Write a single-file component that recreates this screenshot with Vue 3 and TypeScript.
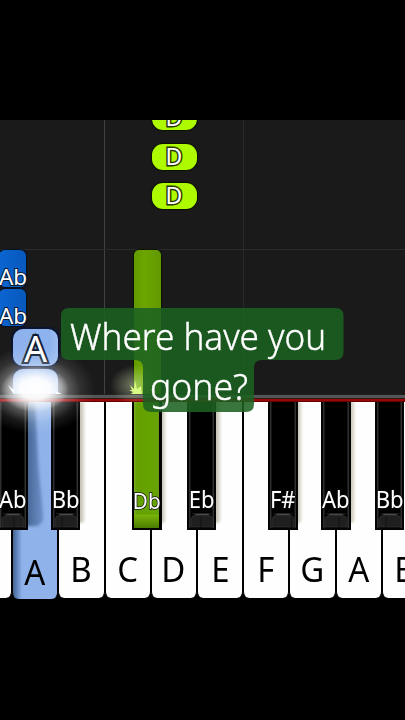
<script setup lang="ts">
interface Note { label: string; x: number; y: number; w: number; h: number; kind: string }
interface BlackKey { label: string; x: number; active?: boolean; shade?: boolean; split: number }

const notes: Note[] = [
  { label: 'D', x: 151.5, y: -16, w: 45, h: 26, kind: 'lime' },
  { label: 'D', x: 151.5, y: 23.5, w: 45, h: 26, kind: 'lime' },
  { label: 'D', x: 151.5, y: 62.5, w: 45, h: 26, kind: 'lime' },
  { label: 'Ab', x: -1, y: 130, w: 27, h: 37, kind: 'blue' },
  { label: 'Ab', x: -1, y: 169, w: 27, h: 37, kind: 'blue' },
  { label: 'A', x: 13, y: 209, w: 45, h: 37, kind: 'sky' },
  { label: '', x: 13, y: 249, w: 45, h: 37, kind: 'sky' },
  { label: '', x: 134, y: 130, w: 27, h: 160, kind: 'green' },
]

const whiteKeys: string[] = ['', 'A', 'B', 'C', 'D', 'E', 'F', 'G', 'A', 'B']

const blackKeys: BlackKey[] = [
  { label: 'Ab', x: -2, split: 13 },
  { label: 'Bb', x: 50.5, shade: true, split: 8 },
  { label: 'Db', x: 132, active: true, shade: true, split: 19 },
  { label: 'Eb', x: 186.5, shade: true, split: 11 },
  { label: 'F#', x: 268, shade: true, split: 21 },
  { label: 'Ab', x: 321, shade: true, split: 15 },
  { label: 'Bb', x: 374.5, split: 8 },
]
</script>

<template>
  <main class="screen">
    <section class="roll">
      <i class="vline first"></i>
      <i class="vline second"></i>
      <i class="hline"></i>
      <div
        v-for="(n, i) in notes"
        :key="i"
        class="note"
        :class="n.kind"
        :style="{ left: n.x + 'px', top: n.y + 'px', width: n.w + 'px', height: n.h + 'px' }"
      ><span>{{ n.label }}</span></div>
    </section>
    <div class="rail"></div>
    <section class="keyboard">
      <div class="whites">
        <div v-for="(k, i) in whiteKeys" :key="i" class="white" :class="{ pressed: i === 1 }">
          <i v-if="i === 1" class="cast"></i>
          <span>{{ k }}</span>
        </div>
      </div>
      <div
        v-for="(b, i) in blackKeys"
        :key="i"
        class="black"
        :class="{ active: b.active, shade: b.shade }"
        :style="{ left: b.x + 'px' }"
      >
        <div class="body"></div>
        <svg v-if="!b.active" class="lip" viewBox="0 0 24 16">
          <path d="M4 1.500H20L18 3H6Z" fill="#484848" />
          <path d="M1 15V7Q2 3.500 5 3.500H19Q22 3.500 23 7V15Z" fill="#1f1f1f" stroke="#3b3b3b" stroke-width=".6" />
          <path d="M2 1L5 3M22 1L19 3" stroke="#333" stroke-width=".6" />
          <path :d="`M${b.split} 5V15`" stroke="#101010" stroke-width="1" />
        </svg>
        <span>{{ b.label }}</span>
      </div>
    </section>
    <div class="glow"></div>
    <div class="glow-small"></div>
    <svg class="sparks" viewBox="0 0 160 20">
      <path d="M8 5L15 11L13 13Z M62 14L55 11L56 14Z" fill="#fff" />
      <path d="M130 5L134 9L135 0L137 9L141 6L142 14H131L133 12L129 10L132 10Z" fill="#d8fb85" />
    </svg>
    <div class="caption">
      <svg class="plate" viewBox="0 0 283 104">
        <path d="M8 0H274.500Q282.500 0 282.500 8V44Q282.500 52 274.500 52H201Q193 52 193 60V96Q193 104 185 104H90Q82 104 82 96V60Q82 52 74 52H8Q0 52 0 44V8Q0 0 8 0Z" fill="#1c6221" fill-opacity=".87" />
      </svg>
      <p><span class="l1">Where have you</span><span class="l2">gone?</span></p>
    </div>
  </main>
</template>

<style>
body { margin: 0; background: #000; }
</style>

<style scoped>
.screen {
  position: relative;
  box-sizing: border-box;
  width: 405px;
  height: 720px;
  padding-top: 120px;
  overflow: hidden;
  background: #000;
  font-family: "Noto Sans", "Open Sans", sans-serif;
}
.roll { position: relative; height: 274px; overflow: hidden; background: #1a1a1a; }
.vline { position: absolute; top: 0; bottom: 0; width: 1px; }
.first { left: 104px; background: #424242; }
.second { left: 243px; background: #292929; }
.hline { position: absolute; top: 129px; left: 0; right: 0; height: 1px; background: #2b2b2b; }
.note {
  position: absolute;
  display: flex;
  justify-content: center;
  align-items: center;
  color: #fff;
}
.note span { line-height: 1; paint-order: stroke fill; }
.lime { border-radius: 11px; background: #aefa00; box-shadow: 0 0 1px 1px #0c1200; font-size: 23px; }
.lime span { -webkit-text-stroke: 3px #283900; }
.blue { border-radius: 6px; background: linear-gradient(90deg, #0b65d1, #0758bc); box-shadow: 0 0 1px 1px #07101f; font-size: 22.500px; align-items: flex-end; }
.blue span { transform: translate(.5px, 1px); -webkit-text-stroke: 2px #071a38; }
.sky { border-radius: 10px; background: linear-gradient(90deg, #8db2ed 0 80%, #9dbef0); box-shadow: 0 0 1px 1.500px #0b1530; font-size: 36px; }
.sky span { transform: translateY(1px); -webkit-text-stroke: 4px #101a30; }
.green { border-radius: 5px 5px 0 0; background: linear-gradient(90deg, #629a00, #6ca600 40%, #629800); box-shadow: 0 0 1px 1px #0d1500; }
.rail {
  height: 8px;
  background: linear-gradient(#202020 0 1px, #555 1px 4px, #2c1a1a 4px 5px, #9a0709 5px 7px, #600 7px);
}
.keyboard { position: relative; height: 197px; overflow: hidden; }
.whites { display: flex; width: 462px; height: 196px; margin-left: -34px; }
.white {
  position: relative;
  flex: 0 0 46.200px;
  box-sizing: border-box;
  display: flex;
  justify-content: center;
  align-items: flex-end;
  border: solid #000;
  border-width: 0 1px 0 .8px;
  border-radius: 0 0 6px 6px;
  background: #fefefe;
  color: #000;
  font-size: 34px;
}
.white > span { line-height: 34px; margin-bottom: 12px; transform: scaleX(.97); }
.pressed { height: 197px; background: linear-gradient(90deg, #45658f 0, #5f85bb 4px, #8eb2e9 9px, #8eb2e9); }
.pressed > span { margin-bottom: 10.500px; }
.cast {
  position: absolute;
  top: 0;
  left: 0;
  width: 30px;
  height: 124px;
  filter: blur(1.500px);
}
.cast::before {
  content: "";
  position: absolute;
  inset: 0;
  background: linear-gradient(90deg, #46658f 14px, #5577aa 20px, #6a90c8);
  clip-path: polygon(0 0, 22px 0, 25px 50%, 30px 92%, 29px 97%, 24px 100%, 0 100%);
}
.black { position: absolute; top: 0; width: 29.500px; height: 128px; }
.body {
  position: relative;
  box-sizing: border-box;
  height: 128px;
  border: solid #030303;
  border-width: 0 2px 2px;
  background: linear-gradient(90deg, #2e2e2e 0 1px, #000 2px calc(100% - 2px), #303030 calc(100% - 1px));
}
.shade::before {
  content: "";
  position: absolute;
  top: 0;
  left: 24px;
  width: 10px;
  height: 121px;
  border-radius: 0 0 4px;
  background: linear-gradient(90deg, #aaa897, #c9c7b8 60%, #f1f0e8);
  filter: blur(.8px);
}
.lip { position: absolute; left: 3px; bottom: 2px; width: 24px; height: 16px; }
.black > span {
  position: absolute;
  left: -10px;
  right: -10px;
  top: 84px;
  text-align: center;
  color: #fff;
  font-size: 23px;
  line-height: 26px;
  transform: scaleX(.96);
  -webkit-text-stroke: 1.500px #111;
  paint-order: stroke fill;
}
.active .body {
  border-width: 0 3px 2px 2px;
  background: linear-gradient(transparent 112px, #79b40b 113px, #4b7c00 126px), linear-gradient(90deg, #78a926, #64a000 3px, #66a500 90%, #6a9b20);
}
.active > span { font-size: 21.500px; top: 86px; }
.glow {
  position: absolute;
  left: -25px;
  top: 344px;
  width: 120px;
  height: 90px;
  background:
    radial-gradient(ellipse 34px 23px at 60px 45px, #fff 0, rgba(255, 255, 255, .9) 45%, transparent 100%),
    radial-gradient(ellipse 60px 44px at 60px 46px, rgba(255, 255, 255, .7) 0, rgba(255, 255, 255, .4) 45%, rgba(255, 255, 255, .1) 75%, transparent 100%);
}
.glow-small {
  position: absolute;
  left: 110px;
  top: 365px;
  width: 50px;
  height: 40px;
  background: radial-gradient(ellipse 25px 20px at center, rgba(235, 255, 200, .45), transparent);
}
.sparks { position: absolute; left: 0; top: 380px; width: 160px; height: 20px; }
.caption { position: absolute; left: 61px; top: 308px; width: 283px; height: 104px; }
.plate { position: absolute; inset: 0; width: 283px; height: 104px; }
.caption p { position: relative; display: flex; flex-direction: column; margin: 0; color: #fff; font-size: 37px; font-weight: 300; line-height: 50px; white-space: nowrap; -webkit-text-stroke: .4px #fff; }
.caption p span { align-self: flex-start; transform-origin: left; }
.l1 { margin-left: 9px; margin-top: 3px; transform: scaleX(.948); }
.l2 { margin-left: 89px; transform: scaleX(.96); }
</style>
